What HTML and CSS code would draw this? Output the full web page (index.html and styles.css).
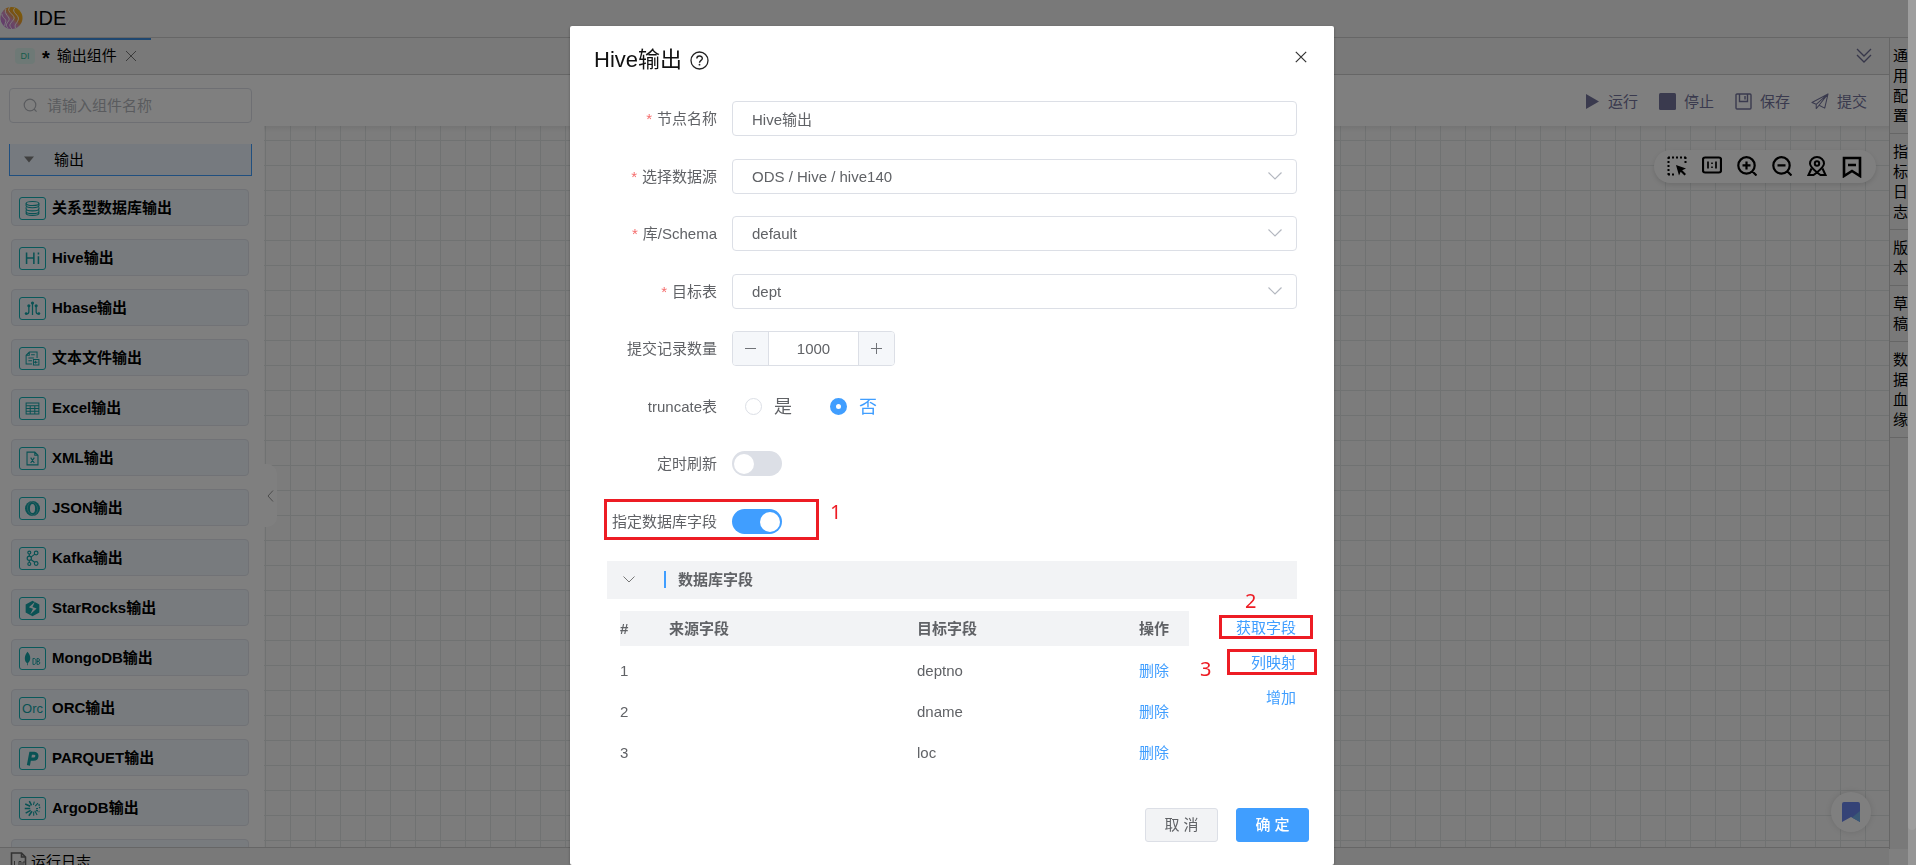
FILE: index.html
```html
<!DOCTYPE html>
<html lang="zh-CN">
<head>
<meta charset="utf-8">
<title>IDE</title>
<meta name="viewport" content="width=device-width, initial-scale=1">
<link rel="stylesheet" href="styles.css">
</head>
<body>
<div class="app">
  <header class="topbar">
    <svg class="logo" viewBox="0 0 24 24" aria-hidden="true">
      <defs><linearGradient id="lg" x1="0" y1="1" x2="1" y2="0"><stop offset="0" stop-color="#b86ee0"/><stop offset=".45" stop-color="#d890c8"/><stop offset=".6" stop-color="#f0a030"/><stop offset="1" stop-color="#ffc400"/></linearGradient></defs>
      <circle cx="12" cy="12" r="11.5" fill="url(#lg)"/>
      <g fill="none" stroke="#fff" stroke-width="1" stroke-linecap="round"><path d="M10 1C5 6 18 9 14 14S9 19 12 23"/><path d="M6 3C3 8 12 11 9 15s-3 5-1 7"/><path d="M2 8c0 4 5 5 4 8s-1 3-1 4"/><path d="M15 2c-4 4 6 7 4 12s-4 4-3 8"/></g>
    </svg>
    <h1 class="brand">IDE</h1>
  </header>
  <div class="body">
    <main class="workspace">
      <nav class="tabs">
        <div class="tab">
          <span class="badge">DI</span><b class="dirty">*</b><span>输出组件</span>
          <button class="icon-btn tab-close" aria-label="关闭标签"><svg width="12" height="12" viewBox="0 0 12 12"><path d="M1 1l10 10M11 1L1 11" stroke="#777" fill="none"/></svg></button>
        </div>
        <button class="icon-btn" aria-label="更多"><svg width="16" height="16" viewBox="0 0 16 16"><path d="M1 1l7 7 7-7M1 7l7 7 7-7" stroke="#6e6e94" stroke-width="1.3" fill="none"/></svg></button>
      </nav>
      <div class="editor">
        <aside class="sidebar">
          <label class="search">
            <svg width="15" height="15" viewBox="0 0 15 15" aria-hidden="true"><circle cx="7" cy="7" r="5.8" fill="none" stroke="#b4b7bd" stroke-width="1.2"/><path d="M11 11l2.600 2.600" stroke="#b4b7bd" stroke-width="1.200"/></svg>
            <input type="text" placeholder="请输入组件名称" aria-label="请输入组件名称">
          </label>
          <button class="group"><svg width="10" height="7" viewBox="0 0 10 7" aria-hidden="true"><path d="M0 .5h10L5 6.500z" fill="#808080"/></svg>输出</button>
          <ul class="items">
            <li class="item"><svg class="ico" viewBox="0 0 27 23"><g fill="none" stroke="currentColor" stroke-width="1.200"><ellipse cx="13.500" cy="6" rx="7" ry="2.200"/><path d="M6.500 6v2.500c0 2.800 14 2.800 14 0V6M6.500 10v2c0 2.800 14 2.800 14 0v-2M6.500 13.500v1.500c0 2.800 14 2.800 14 0v-1.500M6.500 16v1c0 2.800 14 2.800 14 0v-1"/></g></svg>关系型数据库输出</li>
            <li class="item"><svg class="ico" viewBox="0 0 27 23"><path d="M7 5v12.500M15 5v12.500M7 11h8M20 9v8.500M20 5v2" fill="none" stroke="currentColor" stroke-width="1.700"/></svg>Hive输出</li>
            <li class="item"><svg class="ico" viewBox="0 0 27 23"><g fill="none" stroke="currentColor" stroke-width="1.400"><path d="M13.500 6v12.500M9.500 9v6c0 2-1 2.500-3 2.500M17.500 9v6c0 2 1 2.500 3 2.500"/></g><g fill="currentColor"><circle cx="13.500" cy="5.500" r="1.700"/><circle cx="9.500" cy="8.500" r="1.700"/><circle cx="17.500" cy="8.500" r="1.700"/><circle cx="6.500" cy="17" r="1.500"/><circle cx="20.500" cy="17" r="1.500"/></g></svg>Hbase输出</li>
            <li class="item"><svg class="ico" viewBox="0 0 27 23"><g fill="none" stroke="currentColor" stroke-width="1.100"><path d="M13 17.500H6.500V8L10 4.500h8.500V11M10 4.500V8H6.500M12 7.500h4M9 11h6M9 14h4"/><path d="M14.500 12.500h6v6h-6zM19 15.500h-3l1.300-1.300M16 15.500l1.300 1.300"/></g></svg>文本文件输出</li>
            <li class="item"><svg class="ico" viewBox="0 0 27 23"><path d="M6.500 5.500h14v12h-14zM6.500 8.500h14M6.500 11.500h14M6.500 14.500h14M11 8.500v9M16 8.500v9" fill="none" stroke="currentColor" stroke-width="1.100"/></svg>Excel输出</li>
            <li class="item"><svg class="ico" viewBox="0 0 27 23"><path d="M7.500 4.500h8.500l3.500 3.500v10.500h-12zM16 4.500V8h3.500M11.500 10.500l4 6M15.500 10.500l-4 6" fill="none" stroke="currentColor" stroke-width="1.200"/></svg>XML输出</li>
            <li class="item"><svg class="ico" viewBox="0 0 27 23"><circle cx="13.500" cy="11.500" r="8.200" fill="currentColor"/><ellipse cx="13.500" cy="11.500" rx="2.800" ry="5" fill="#f0f7fd"/><path d="M13.500 3.500c-8 2-7 14 1 15.500M13.500 19.500c8-2 7-14-1-15.500" fill="none" stroke="#9fd3d6" stroke-width=".6"/></svg>JSON输出</li>
            <li class="item"><svg class="ico" viewBox="0 0 27 23"><g fill="none" stroke="currentColor" stroke-width="1.300"><circle cx="10" cy="5" r="1.600"/><circle cx="10" cy="11.200" r="2.300"/><circle cx="10" cy="17.500" r="1.600"/><circle cx="17.500" cy="5.500" r="2"/><circle cx="17.500" cy="17" r="2"/><path d="M10 6.700v2.200M10 13.600v2.200M11.800 10l4.300-3.300M11.800 12.500l4.300 3.300"/></g></svg>Kafka输出</li>
            <li class="item"><svg class="ico" viewBox="0 0 27 23"><path d="M13.500 3l7.500 4.200v8.600L13.500 20 6 15.800V7.200z" fill="currentColor"/><path d="M16 4.500l-6.500 5.500 4.500 1.700-3 6.300 7-6.500-4.500-1.700z" fill="#f0f7fd"/></svg>StarRocks输出</li>
            <li class="item"><svg class="ico" viewBox="0 0 27 23"><path d="M8 4c4 4 4 10 .3 12.500V19h-.8v-2.500C4 14 4.500 8 8 4z" fill="currentColor"/><path d="M14 11.500v6.500h1.500c2.500 0 2.500-6.500 0-6.500zM18.500 11.500v6.500h1.500c2 0 2-3.300 0-3.300h-1.500 1.300c1.800 0 1.800-3.200 0-3.200z" fill="none" stroke="currentColor"/></svg>MongoDB输出</li>
            <li class="item"><span class="ico ico-text">Orc</span>ORC输出</li>
            <li class="item"><svg class="ico" viewBox="0 0 27 23"><path d="M9 19L11.500 5.800h4c4.200 0 3.600 6.400-.8 6.400h-4" fill="none" stroke="currentColor" stroke-width="3.400"/></svg>PARQUET输出</li>
            <li class="item"><svg class="ico" viewBox="0 0 27 23"><g fill="none" stroke="currentColor" stroke-width="1.700"><path d="M11 9L5.500 6.500M11 11.500H5M11.500 13.500L6 16.500M13 14.500l-3.500 5M12.500 8L10 3.500"/><path d="M14.500 7.500L15.500 4M16.500 9l3-3.500M16 14l2.500 4.500M14.800 15v4.500M17.500 11.500h2" stroke-width="1.200"/><path d="M20 8l1.500-.5M17.500 13.500l3.500 1.500M20.500 10.500h1.500" stroke-dasharray="2 1"/></g></svg>ArgoDB输出</li>
            <li class="item"><span class="ico ico-solid"></span></li>
          </ul>
        </aside>
        <section class="stage">
          <div class="toolbar">
            <button class="tool"><svg width="17" height="17" viewBox="0 0 17 17"><path d="M3 1l13 7.500L3 16z" fill="currentColor"/></svg>运行</button>
            <button class="tool"><svg width="17" height="17" viewBox="0 0 17 17"><rect width="17" height="17" rx="1.500" fill="currentColor"/></svg>停止</button>
            <button class="tool"><svg width="17" height="17" viewBox="0 0 17 17"><path d="M1 2a1 1 0 0 1 1-1h13a1 1 0 0 1 1 1v13a1 1 0 0 1-1 1H2a1 1 0 0 1-1-1zM4.500 1v7.500h8V1M10 3v3.500" fill="none" stroke="currentColor" stroke-width="1.400"/></svg>保存</button>
            <button class="tool"><svg width="18" height="17" viewBox="0 0 19 18"><path d="M18 1L1 10l4.500 2L18 1l-3.500 15L8.500 13 18 1M5.500 12v4.500l3-3.500" fill="none" stroke="currentColor" stroke-width="1.100" stroke-linejoin="round"/></svg>提交</button>
          </div>
          <div class="canvas">
            <button class="handle" aria-label="收起"><svg width="7" height="12" viewBox="0 0 7 12"><path d="M6 .5L1 6l5 5.500" fill="none" stroke="#999"/></svg></button>
            <div class="pill">
              <button class="icon-btn" aria-label="框选"><svg width="20" height="20" viewBox="0 0 20 20"><path d="M1 1.500h19M1.500 1v18M1 18.500h8M18.500 1v8" fill="none" stroke="#000" stroke-width="2" stroke-dasharray="2 2"/><path d="M9 9l10 3.500-3.800 1.700 3.800 3.800-1.500 1.500-3.800-3.800L12 19.500z"/></svg></button>
              <button class="icon-btn" aria-label="1:1"><svg width="20" height="20" viewBox="0 0 20 20"><rect x="1" y="1.500" width="18" height="15" rx="2" fill="none" stroke="#000" stroke-width="2.200"/><path d="M6 5.500v7M14 5.500v7" stroke="#000" stroke-width="1.700"/><path d="M9.200 6.500h1.600V8H9.200zM9.200 10.500h1.600V12H9.200z"/></svg></button>
              <button class="icon-btn" aria-label="放大"><svg width="20" height="20" viewBox="0 0 20 20"><path d="M9.500 1.200a8 8 0 1 0 0 16.400 8 8 0 0 0 0-16.400M15.500 15.500l4 4M5.500 9.400h8M9.500 5.400v8" fill="none" stroke="#000" stroke-width="2.200"/></svg></button>
              <button class="icon-btn" aria-label="缩小"><svg width="20" height="20" viewBox="0 0 20 20"><path d="M9.500 1.200a8 8 0 1 0 0 16.400 8 8 0 0 0 0-16.400M15.500 15.500l4 4M5.500 9.400h8" fill="none" stroke="#000" stroke-width="2.200"/></svg></button>
              <button class="icon-btn" aria-label="定位"><svg width="20" height="20" viewBox="0 0 20 20"><g fill="none" stroke="#000" stroke-width="2"><path d="M10 16.500C6 13 3 10.500 3 7.500a7 6.500 0 0 1 14 0c0 3-3 5.500-7 9z"/><circle cx="10" cy="7.500" r="2.200"/><path d="M4.500 12.500L1.500 19h5L10 16.500l3.500 2.500h5l-3-6.500"/></g></svg></button>
              <button class="icon-btn" aria-label="书签"><svg class="low" width="20" height="22" viewBox="0 0 20 22"><path d="M2 2h16v18l-8-5-8 5zM6 9h8" fill="none" stroke="#000" stroke-width="2.600"/></svg></button>
            </div>
            <button class="fab" aria-label="收藏"><svg width="18" height="20" viewBox="0 0 18 20"><path d="M2 0h14a2 2 0 0 1 2 2v18l-9-5-9 5V2a2 2 0 0 1 2-2z" fill="#6a86ee"/><path d="M18 9v11l-8-4.500z" fill="#72b0ea"/></svg></button>
          </div>
        </section>
      </div>
      <footer class="logbar"><svg width="17" height="17" viewBox="0 0 17 17" aria-hidden="true"><path d="M1.500 16V1h10l4 4v11M11.500 1v4h4" fill="none" stroke="#666" stroke-width="1.600"/><path d="M4.500 9v5h2.500M9 9.500h2v4H9zM15 10h-2v4h2" fill="none" stroke="#666"/></svg>运行日志</footer>
    </main>
    <aside class="rail">
      <button>通用配置</button><button>指标日志</button><button>版本</button><button>草稿</button><button>数据血缘</button>
    </aside>
  </div>
</div>
<div class="scrollbar" aria-hidden="true"><div class="thumb"></div></div>

<div class="overlay">
  <div class="dialog" role="dialog" aria-labelledby="dlg-title">
    <div class="dialog-head">
      <h2 id="dlg-title">Hive输出</h2>
      <svg class="help" width="19" height="19" viewBox="0 0 19 19" aria-hidden="true"><circle cx="9.500" cy="9.500" r="8.500" fill="none" stroke="#222" stroke-width="1.300"/><path d="M6.800 7.600c0-3.500 5.500-3.400 5.500-.2 0 2-2.800 2-2.800 4.300" fill="none" stroke="#222" stroke-width="1.400"/><circle cx="9.500" cy="13.700" r=".9" fill="#222"/></svg>
      <button class="icon-btn close" aria-label="关闭"><svg width="12" height="12" viewBox="0 0 12 12"><path d="M.8.800l10.400 10.400M11.200.800L.8 11.200" stroke="#333" stroke-width="1.200"/></svg></button>
    </div>
    <form class="form">
      <div class="field"><label class="req" for="f-name">节点名称</label><input class="box" id="f-name" type="text" value="Hive输出"></div>
      <div class="field tight"><label class="req" for="f-src">选择数据源</label><div class="select"><select class="box" id="f-src"><option>ODS / Hive / hive140</option></select><svg class="arrow" viewBox="0 0 14 8"><path d="M.5.500L7 7l6.500-6.500"/></svg></div></div>
      <div class="field"><label class="req" for="f-db">库/Schema</label><div class="select"><select class="box" id="f-db"><option>default</option></select><svg class="arrow" viewBox="0 0 14 8"><path d="M.5.500L7 7l6.500-6.500"/></svg></div></div>
      <div class="field tight"><label class="req" for="f-tbl">目标表</label><div class="select"><select class="box" id="f-tbl"><option>dept</option></select><svg class="arrow" viewBox="0 0 14 8"><path d="M.5.500L7 7l6.500-6.500"/></svg></div></div>
      <div class="field"><label for="f-cnt">提交记录数量</label><div class="number"><button type="button" aria-label="减少"><svg width="11" height="11" viewBox="0 0 11 11"><path d="M0 5.500h11"/></svg></button><input id="f-cnt" type="text" value="1000"><button type="button" aria-label="增加"><svg width="11" height="11" viewBox="0 0 11 11"><path d="M0 5.500h11M5.500 0v11"/></svg></button></div></div>
      <div class="field tight"><span class="label">truncate表</span><div class="radios"><label><input type="radio" name="trunc">是</label><label><input type="radio" name="trunc" checked>否</label></div></div>
      <div class="field"><label for="f-timer">定时刷新</label><input class="switch" id="f-timer" type="checkbox"></div>
      <div class="field tight marked"><label for="f-spec">指定数据库字段</label><input class="switch" id="f-spec" type="checkbox" checked><span class="mark mark-1"></span><span class="num num-1">1</span></div>
    </form>
    <div class="section-head"><svg width="12" height="7" viewBox="0 0 12 7" aria-hidden="true"><path d="M.5.500L6 6l5.500-5.500" fill="none" stroke="#777"/></svg><h3>数据库字段</h3></div>
    <div class="mapping">
      <table>
        <colgroup><col class="c-idx"><col class="c-src"><col class="c-dst"><col class="c-op"></colgroup>
        <thead><tr><th>#</th><th>来源字段</th><th>目标字段</th><th>操作</th></tr></thead>
        <tbody>
          <tr><td>1</td><td></td><td>deptno</td><td><a href="#">删除</a></td></tr>
          <tr><td>2</td><td></td><td>dname</td><td><a href="#">删除</a></td></tr>
          <tr><td>3</td><td></td><td>loc</td><td><a href="#">删除</a></td></tr>
        </tbody>
      </table>
      <div class="links">
        <div class="link"><a href="#">获取字段</a><span class="mark mark-2"></span><span class="num num-2">2</span></div>
        <div class="link"><a href="#">列映射</a><span class="mark mark-3"></span><span class="num num-3">3</span></div>
        <div class="link"><a href="#">增加</a></div>
      </div>
    </div>
    <div class="actions"><button class="btn">取 消</button><button class="btn primary">确 定</button></div>
  </div>
</div>
</body>
</html>
```

FILE: styles.css
```css
* { box-sizing: border-box; }
html, body { height: 100%; }
body {
  margin: 0;
  overflow: hidden;
  font: 15px/20px "Liberation Sans", "Noto Sans CJK SC", sans-serif;
  color: #000;
  background: #fff;
}
button, input, select { font: inherit; color: inherit; }
button { border: 0; background: none; padding: 0; cursor: pointer; }
svg { display: block; flex: none; }
h1, h2, h3, ul { margin: 0; padding: 0; font-weight: 400; }
a { color: #409eff; text-decoration: none; }
.icon-btn { display: flex; align-items: center; justify-content: center; }

/* application shell */
.app { height: 100vh; display: flex; flex-direction: column; padding-right: 8px; }
.topbar {
  height: 38px;
  display: flex;
  align-items: center;
  gap: 10px;
  padding-bottom: 2px;
  background: #f2f2f2;
  border-bottom: 1px solid #ccc;
}
.logo { width: 23px; height: 24px; }
.brand { font-size: 20px; }
.body { flex: 1; display: flex; min-height: 0; }
.workspace { flex: 1; min-width: 0; display: flex; flex-direction: column; }

.tabs {
  height: 37px;
  display: flex;
  align-items: center;
  justify-content: space-between;
  padding-right: 17px;
  background: #f2f2f2;
  border-bottom: 1px solid #ccc;
}
.tab {
  width: 151px;
  height: 36px;
  display: flex;
  align-items: center;
  padding: 0 0 2px 15px;
  border-top: 2px solid #3f8fe0;
}
.badge {
  width: 20px;
  height: 16px;
  border-radius: 4px;
  background: #dcf3ec;
  color: #2fb896;
  font-size: 9px;
  line-height: 17px;
  text-align: center;
}
.dirty { margin: 0 7px; font-size: 20px; line-height: 28px; padding-top: 4px; }
.tab-close { margin-left: 8px; }

.editor { flex: 1; min-height: 0; display: flex; }
.sidebar { width: 264px; flex: none; padding: 13px 12px 0 9px; overflow: hidden; }
.search {
  height: 35px;
  display: flex;
  align-items: center;
  gap: 9px;
  padding-left: 13px;
  border: 1px solid #dcdfe6;
  border-radius: 4px;
}
.search input { flex: 1; min-width: 0; border: 0; outline: 0; background: none; padding: 0; }
.search input::placeholder { color: #b4b7bd; opacity: 1; }
.group {
  width: 100%;
  height: 32px;
  margin: 21px 0 13px;
  padding-left: 14px;
  display: flex;
  align-items: center;
  gap: 20px;
  background: #ecf5ff;
  border: 1px solid #409eff;
  border-top: 0;
}
.items { list-style: none; padding: 0 3px 0 2px; display: flex; flex-direction: column; gap: 13px; }
.item {
  height: 37px;
  flex: none;
  display: flex;
  align-items: center;
  gap: 6px;
  padding: 1px 0 0 7px;
  font-weight: 700;
  background: #f0f7fd;
  border: 1px solid #e2e5ec;
  border-radius: 4px;
}
.ico {
  width: 27px;
  height: 23px;
  border: 1px solid #12b2b6;
  border-radius: 3px;
  color: #12a4a8;
}
.ico-text { font-size: 13px; font-weight: 400; line-height: 21px; text-align: center; }
.ico-solid { background: #12a4a8; }

.stage { flex: 1; min-width: 0; display: flex; flex-direction: column; }
.toolbar {
  height: 51px;
  display: flex;
  align-items: center;
  justify-content: flex-end;
  gap: 21px;
  padding: 2px 22px 0 0;
}
.tool { display: flex; align-items: center; gap: 8px; color: #74749c; }
.canvas {
  flex: 1;
  position: relative;
  background-color: #f8f8f8;
  background-image:
    linear-gradient(rgba(0, 0, 0, .06), transparent 6px),
    linear-gradient(#e0e4e4 1px, transparent 1px),
    linear-gradient(90deg, #e0e4e4 1px, transparent 1px);
  background-size: auto, 25px 25px, 25px 25px;
  background-position: 0 0, 0 14px, 1px 0;
}
.handle {
  position: absolute;
  left: 0;
  top: 338px;
  width: 13px;
  height: 63px;
  display: flex;
  align-items: center;
  justify-content: center;
  background: #fff;
  border-radius: 0 10px 10px 0;
}
.pill {
  position: absolute;
  right: 13px;
  top: 24px;
  height: 33px;
  display: flex;
  align-items: center;
  gap: 15px;
  padding: 0 14px 2px 13px;
  border-radius: 17px;
  background: #fff;
  box-shadow: 0 2px 5px rgba(0, 0, 0, .12);
}
.low { margin-top: 3px; }
.fab {
  position: absolute;
  right: 18px;
  bottom: 15px;
  width: 40px;
  height: 40px;
  display: flex;
  align-items: center;
  justify-content: center;
  border-radius: 50%;
  background: #fff;
  box-shadow: 0 0 6px rgba(0, 0, 0, .12);
}
.logbar {
  height: 18px;
  flex: none;
  display: flex;
  gap: 4px;
  padding: 4px 10px 0;
  background: #f2f2f2;
  border-top: 1px solid #ccc;
  overflow: hidden;
}
.rail {
  width: 19px;
  flex: none;
  overflow: hidden;
  margin-bottom: 16px;
  background: #f2f2f2;
  border-left: 1px solid #ccc;
}
.rail button {
  display: block;
  width: 25px;
  padding: 8px 7px 7px 3px;
  border-bottom: 1px solid #ccc;
  word-break: break-all;
  text-align: left;
}
.scrollbar {
  position: fixed;
  z-index: 3;
  top: 0;
  right: 0;
  bottom: 0;
  width: 8px;
  background: #959595;
}
.thumb { height: 96%; border-radius: 0 0 4px 4px; background: #9e9e9e; }

/* dialog */
.overlay {
  position: fixed;
  z-index: 2;
  inset: 0;
  display: flex;
  align-items: flex-start;
  justify-content: center;
  padding: 26px 12px 0 0;
  background: rgba(0, 0, 0, .5);
  overflow: hidden;
}
.dialog {
  width: 100%;
  max-width: 764px;
  min-height: 100%;
  padding: 21px 37px 23px;
  background: #fff;
  border-radius: 2px;
  box-shadow: 0 1px 3px rgba(0, 0, 0, .3);
  color: #606266;
}
.dialog-head {
  display: flex;
  align-items: center;
  gap: 8px;
  margin: 0 -10px 0 -13px;
  color: #111;
}
.dialog-head h2 { font-size: 22px; line-height: 26px; }
.close { margin: 0 0 6px auto; width: 12px; height: 18px; }
.form { margin-top: 28px; }
.field { display: flex; align-items: center; height: 35px; margin-bottom: 23px; }
.field.tight { margin-bottom: 22px; }
.field > label, .field > .label { width: 125px; flex: none; padding-right: 15px; text-align: right; white-space: nowrap; }
.req::before { content: "*"; color: #f56c6c; margin-right: 5px; }
.box {
  flex: 1;
  width: 100%;
  height: 35px;
  padding: 0 19px;
  border: 1px solid #dcdfe6;
  border-radius: 4px;
  background: #fff;
  appearance: none;
  outline: 0;
}
.select { flex: 1; position: relative; }
.arrow {
  position: absolute;
  right: 15px;
  top: 13px;
  width: 14px;
  height: 8px;
  fill: none;
  stroke: #b4b8c0;
  stroke-width: 1.2;
  pointer-events: none;
}
.number {
  width: 163px;
  height: 35px;
  display: flex;
  border: 1px solid #dcdfe6;
  border-radius: 4px;
  overflow: hidden;
}
.number button {
  width: 35px;
  flex: none;
  display: flex;
  align-items: center;
  justify-content: center;
  background: #f5f7fa;
  stroke: #707378;
}
.number input {
  flex: 1;
  min-width: 0;
  padding: 0;
  text-align: center;
  border: solid #dcdfe6;
  border-width: 0 1px;
  outline: 0;
}
.radios { display: flex; gap: 38px; padding-left: 13px; font-size: 18px; }
.radios label { display: flex; align-items: center; gap: 12px; }
.radios input {
  appearance: none;
  margin: 0;
  width: 17px;
  height: 17px;
  border: 1px solid #dcdfe6;
  border-radius: 50%;
  background: #fff;
}
.radios input:checked { border: 6px solid #409eff; }
.radios label:has(input:checked) { color: #409eff; }
.switch {
  appearance: none;
  margin: 0;
  width: 50px;
  height: 25px;
  padding: 2px;
  display: flex;
  align-items: center;
  border-radius: 13px;
  background: #dcdfe6;
}
.switch::before { content: ""; width: 20px; height: 20px; border-radius: 50%; background: #fff; }
.switch:checked { background: #409eff; justify-content: flex-end; }

.section-head {
  height: 38px;
  display: flex;
  align-items: center;
  gap: 29px;
  padding: 0 0 2px 16px;
  background: #f2f3f5;
}
.section-head h3 { font-size: 15px; font-weight: 700; line-height: 17px; padding-left: 12px; border-left: 2px solid #409eff; }
.mapping { display: flex; justify-content: space-between; align-items: flex-start; padding: 12px 0 0 13px; }
table { width: 569px; table-layout: fixed; border-collapse: collapse; }
.c-idx { width: 49px; }
.c-src { width: 248px; }
.c-dst { width: 222px; }
th, td { padding: 0; text-align: left; }
th { height: 35px; background: #f2f3f5; }
td { height: 41px; }
tbody::before { content: ""; display: block; height: 4px; }
.links { display: flex; flex-direction: column; align-items: flex-end; gap: 15px; padding: 7px 1px 0 0; }
.link { position: relative; }

/* numbered callouts */
.marked { position: relative; }
.mark { position: absolute; border: 3px solid #ed1c24; pointer-events: none; }
.num { position: absolute; color: #ed1c24; font-family: "Noto Sans", sans-serif; font-size: 20px; line-height: 20px; }
.mark-1 { left: -3px; top: -5px; width: 215px; height: 41px; }
.num-1 { left: 223px; top: -2px; }
.mark-2 { left: -17px; top: -3px; width: 94px; height: 24px; }
.num-2 { left: 9px; top: -27px; }
.mark-3 { left: -24px; top: -4px; width: 90px; height: 26px; }
.num-3 { left: -51px; top: 6px; }

.actions { display: flex; justify-content: flex-end; gap: 18px; margin: 35px -12px 0 0; }
.btn {
  width: 73px;
  height: 34px;
  border: 1px solid #dcdfe6;
  border-radius: 3px;
  background: #f2f3f5;
}
.btn.primary { background: #409eff; border-color: #409eff; color: #fff; font-weight: 500; }
```
